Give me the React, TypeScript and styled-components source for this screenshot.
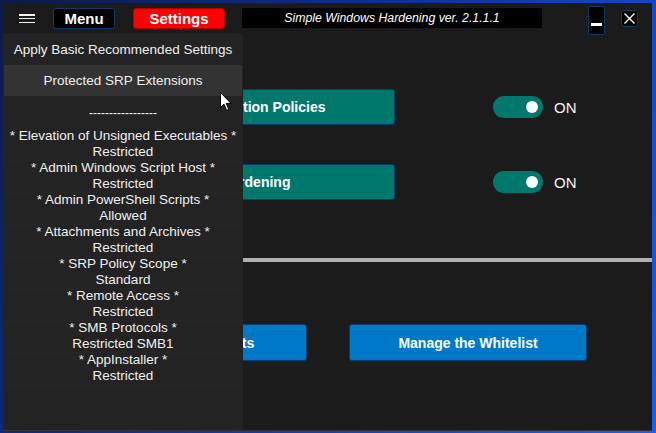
import React from 'react';
import styled, { createGlobalStyle } from 'styled-components';

const GlobalStyle = createGlobalStyle`
  html, body {
    margin: 0;
    padding: 0;
    width: 656px;
    height: 433px;
    overflow: hidden;
    background: linear-gradient(120deg, #0c1a48 0%, #10309a 45%, #1a5ff0 100%);
    font-family: 'Liberation Sans', Arial, sans-serif;
  }
`;

const Desktop = styled.div`
  padding: 3px 4px 2px 3px;
  height: 433px;
  box-sizing: border-box;
`;

const Window = styled.div`
  position: relative;
  height: 428px;
  background: #1b1b1b;
  border-bottom: 1px solid #333;
  box-sizing: border-box;
  display: flex;
  flex-direction: column;
  overflow: hidden;
`;

const TopBar = styled.div`
  height: 30px;
  display: flex;
  align-items: center;
  padding-left: 16px;
  flex-shrink: 0;
`;

const Hamburger = styled.div`
  width: 16px;
  height: 9px;
  display: flex;
  flex-direction: column;
  justify-content: space-between;
  margin-right: 18px;
  margin-top: 1px;

  span {
    display: block;
    height: 1.5px;
    background: #f2f2f2;
  }
`;

const TabButton = styled.div<{ $red?: boolean; $w: number }>`
  width: ${({ $w }) => $w}px;
  height: 21px;
  box-sizing: border-box;
  display: flex;
  align-items: center;
  justify-content: center;
  background: ${({ $red }) => ($red ? '#ff0000' : '#000')};
  border: 1px solid ${({ $red }) => ($red ? '#b00000' : '#0d3a66')};
  border-radius: 3px;
  color: #fff;
  font-weight: bold;
  font-size: 15px;
  margin-right: 18px;
`;

const Title = styled.div`
  width: 300px;
  height: 20px;
  background: #000;
  color: #fff;
  font-style: italic;
  font-size: 12.3px;
  display: flex;
  align-items: center;
  justify-content: center;
  margin-left: -1px;
  margin-right: 46px;
`;

const Minimize = styled.div`
  align-self: flex-start;
  margin-top: 3px;
  width: 17px;
  height: 29px;
  box-sizing: border-box;
  background: #000;
  border: 1px solid #0d3a66;
  border-radius: 2px;
  display: flex;
  justify-content: center;
  align-items: flex-end;
  padding-bottom: 8px;
  margin-right: 16px;

  span {
    width: 11px;
    height: 3px;
    background: #fff;
  }
`;

const Close = styled.div`
  width: 17px;
  height: 17px;
  box-sizing: border-box;
  background: #000;
  border: 1px solid #0d3a66;
  border-radius: 3px;
  display: flex;
  align-items: center;
  justify-content: center;
  margin-top: 1px;
`;

const Content = styled.div`
  display: flex;
  flex-direction: column;
  padding-top: 56px;
`;

const OptionRow = styled.div`
  display: flex;
  align-items: center;
  height: 36px;
  padding-left: 60px;
  & + & {
    margin-top: 39px;
  }
`;

const ActionButton = styled.div<{ $blue?: boolean }>`
  width: ${({ $blue }) => ($blue ? 238 : 332)}px;
  height: ${({ $blue }) => ($blue ? 37 : 36)}px;
  box-sizing: border-box;
  display: flex;
  align-items: center;
  justify-content: center;
  background: ${({ $blue }) => ($blue ? '#0078c8' : '#00796c')};
  border: 1px solid #0b3c6e;
  border-radius: 3px;
  color: #fff;
  font-weight: bold;
  font-size: 14px;
`;

const Toggle = styled.div`
  width: 50px;
  height: 22px;
  border-radius: 11px;
  background: #00796c;
  margin-left: 98px;
  position: relative;

  &::after {
    content: '';
    position: absolute;
    right: 5px;
    top: 5px;
    width: 12px;
    height: 12px;
    border-radius: 50%;
    background: #fff;
  }
`;

const ToggleLabel = styled.span`
  margin-left: 11px;
  color: #f4f4f4;
  font-size: 15px;
`;

const Separator = styled.div`
  height: 4px;
  background: #b0b0b0;
  margin-top: 58px;
`;

const ButtonRow = styled.div`
  display: flex;
  justify-content: center;
  gap: 42px;
  margin-top: 62px;
  padding-left: 1px;
`;

const Panel = styled.div`
  position: absolute;
  top: 30px;
  left: 0;
  width: 240px;
  bottom: 0;
  background: #232323;
  color: #f0f0f0;
  font-size: 14px;
  text-align: center;
`;

const MenuItem = styled.div<{ $hover?: boolean; $h: number }>`
  height: ${({ $h }) => $h}px;
  display: flex;
  align-items: center;
  justify-content: center;
  margin: 0 1px;
  background: ${({ $hover }) => ($hover ? '#333333' : 'transparent')};
  font-size: 13.5px;
`;

const Dashes = styled.div`
  line-height: 16px;
  margin: 9px 0 7px;
  font-size: 12px;
`;

const StatusItem = styled.div`
  line-height: 16px;
  border-bottom: 1px solid #262626;
  margin-bottom: -1px;
  font-size: 13.5px;
`;

const Cursor = styled.svg`
  position: absolute;
  left: 217px;
  top: 89px;
`;

const statuses: [string, string][] = [
  ['Elevation of Unsigned Executables', 'Restricted'],
  ['Admin Windows Script Host', 'Restricted'],
  ['Admin PowerShell Scripts', 'Allowed'],
  ['Attachments and Archives', 'Restricted'],
  ['SRP Policy Scope', 'Standard'],
  ['Remote Access', 'Restricted'],
  ['SMB Protocols', 'Restricted SMB1'],
  ['AppInstaller', 'Restricted'],
];

export default function App() {
  return (
    <Desktop>
      <GlobalStyle />
      <Window>
        <TopBar>
          <Hamburger>
            <span />
            <span />
            <span />
          </Hamburger>
          <TabButton $w={62}>Menu</TabButton>
          <TabButton $w={92} $red>
            Settings
          </TabButton>
          <Title>Simple Windows Hardening ver. 2.1.1.1</Title>
          <Minimize>
            <span />
          </Minimize>
          <Close>
            <svg width="13" height="13" viewBox="0 0 13 13">
              <path d="M1.5 1.5 L11.5 11.5 M11.5 1.5 L1.5 11.5" stroke="#fff" strokeWidth="1.4" />
            </svg>
          </Close>
        </TopBar>
        <Content>
          <OptionRow>
            <ActionButton>Software Restriction Policies</ActionButton>
            <Toggle />
            <ToggleLabel>ON</ToggleLabel>
          </OptionRow>
          <OptionRow>
            <ActionButton>System Hardening</ActionButton>
            <Toggle />
            <ToggleLabel>ON</ToggleLabel>
          </OptionRow>
          <Separator />
          <ButtonRow>
            <ActionButton $blue>Restore All Defaults</ActionButton>
            <ActionButton $blue>Manage the Whitelist</ActionButton>
          </ButtonRow>
        </Content>
        <Panel>
          <MenuItem $h={32}>Apply Basic Recommended Settings</MenuItem>
          <MenuItem $h={31} $hover>
            Protected SRP Extensions
          </MenuItem>
          <Dashes>-----------------</Dashes>
          {statuses.map(([name, value]) => (
            <StatusItem key={name}>
              * {name} *
              <br />
              {value}
            </StatusItem>
          ))}
        </Panel>
        <Cursor width="13" height="20" viewBox="0 0 13 20">
          <path
            d="M0.5 0.5 L0.5 15.5 L4 12.2 L6.6 18.3 L8.8 17.4 L6.3 11.4 L11 11.4 Z"
            fill="#fff"
            stroke="#000"
            strokeWidth="1"
          />
        </Cursor>
      </Window>
    </Desktop>
  );
}
